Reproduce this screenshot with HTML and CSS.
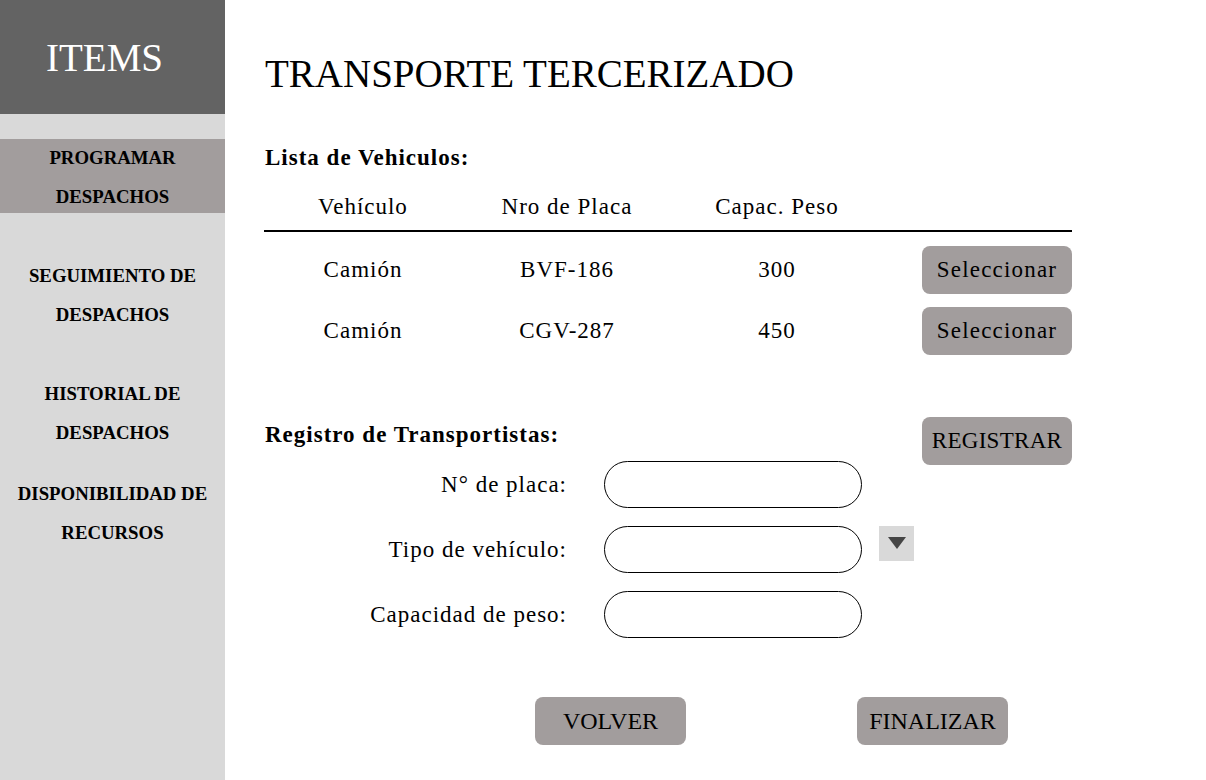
FILE: index.html
```html
<!DOCTYPE html>
<html lang="es">
<head>
<meta charset="utf-8">
<title>Transporte Tercerizado</title>
<link rel="stylesheet" href="styles.css">
</head>
<body>
<div class="app">
  <aside class="sidebar">
    <div class="sidebar-header">ITEMS</div>
    <nav class="nav">
      <a class="nav-item active">PROGRAMAR<br>DESPACHOS</a>
      <a class="nav-item nav-item--2">SEGUIMIENTO DE<br>DESPACHOS</a>
      <a class="nav-item nav-item--3">HISTORIAL DE<br>DESPACHOS</a>
      <a class="nav-item nav-item--4">DISPONIBILIDAD DE<br>RECURSOS</a>
    </nav>
  </aside>
  <main class="main">
    <h1 class="title">TRANSPORTE TERCERIZADO</h1>
    <section class="list">
      <h2 class="section-title">Lista de Vehiculos:</h2>
      <div class="table">
        <div class="row row--head">
          <span class="cell">Vehículo</span>
          <span class="cell">Nro de Placa</span>
          <span class="cell">Capac. Peso</span>
          <span class="cell"></span>
        </div>
        <div class="row row--first">
          <span class="cell">Camión</span>
          <span class="cell">BVF-186</span>
          <span class="cell">300</span>
          <span class="cell cell--action"><button class="btn btn--select">Seleccionar</button></span>
        </div>
        <div class="row">
          <span class="cell">Camión</span>
          <span class="cell">CGV-287</span>
          <span class="cell">450</span>
          <span class="cell cell--action"><button class="btn btn--select">Seleccionar</button></span>
        </div>
      </div>
    </section>
    <section class="register">
      <div class="register-head">
        <h2 class="section-title section-title--register">Registro de Transportistas:</h2>
        <button class="btn btn--register">REGISTRAR</button>
      </div>
      <div class="form">
        <div class="field">
          <label class="field-label">N° de placa:</label>
          <div class="field-input"></div>
        </div>
        <div class="field">
          <label class="field-label">Tipo de vehículo:</label>
          <div class="field-input"></div>
          <div class="dropdown">
            <svg width="20" height="14" viewBox="0 0 20 14"><polygon points="1,1 19,1 10,13" fill="#454545"/></svg>
          </div>
        </div>
        <div class="field">
          <label class="field-label">Capacidad de peso:</label>
          <div class="field-input"></div>
        </div>
      </div>
    </section>
    <div class="actions">
      <button class="btn btn--action">VOLVER</button>
      <button class="btn btn--action">FINALIZAR</button>
    </div>
  </main>
</div>
</body>
</html>
```
FILE: styles.css
```css
* { box-sizing: border-box; }
html, body { margin: 0; padding: 0; background: #ffffff; }
body {
  font-family: "Liberation Serif", "Times New Roman", serif;
  color: #000;
}
.app {
  display: flex;
  width: 1206px;
  height: 780px;
}
.sidebar {
  width: 225px;
  flex: 0 0 225px;
  background: #d9d9d9;
  display: flex;
  flex-direction: column;
}
.sidebar-header {
  height: 114px;
  background: #636363;
  color: #ffffff;
  font-size: 39px;
  display: flex;
  align-items: center;
  justify-content: center;
  padding-right: 16px;
}
.nav {
  display: flex;
  flex-direction: column;
  margin-top: 25px;
}
.nav-item {
  display: flex;
  align-items: center;
  justify-content: center;
  text-align: center;
  font-weight: bold;
  font-size: 18.8px;
  line-height: 39px;
  padding-top: 2px;
}
.nav-item.active {
  background: #a29d9d;
  height: 74px;
  padding-top: 2px;
}
.nav-item--2 { margin-top: 41px; }
.nav-item--3 { margin-top: 38px; }
.nav-item--4 { margin-top: 20px; }

.main {
  flex: 1;
  padding: 52px 0 0 39px;
}
.title {
  margin: 0;
  font-weight: normal;
  font-size: 39px;
  line-height: 43px;
  padding-left: 1px;
}
.list { margin-top: 49px; }
.section-title {
  margin: 0;
  font-size: 23px;
  line-height: 28px;
  font-weight: bold;
  letter-spacing: 1px;
  padding-left: 1px;
}
.table {
  width: 808px;
  margin-top: 21px;
  font-size: 23px;
  letter-spacing: 1px;
}
.row {
  display: grid;
  grid-template-columns: 198px 210px 210px 190px;
  align-items: center;
  height: 48px;
  margin-top: 13px;
}
.row--first { margin-top: 14px; }
.row--head {
  height: auto;
  margin-top: 0;
  line-height: 28px;
  padding-bottom: 9px;
  border-bottom: 2px solid #000;
}
.cell { text-align: center; }
.cell--action { display: flex; justify-content: flex-end; }
.btn {
  font-family: "Liberation Serif", "Times New Roman", serif;
  color: #000;
  background: #a29d9d;
  border: none;
  border-radius: 8px;
  display: flex;
  align-items: center;
  justify-content: center;
  padding: 0;
}
.btn--select {
  width: 150px;
  height: 48px;
  font-size: 23px;
  letter-spacing: 1.2px;
}
.register { margin-top: 62px; width: 808px; }
.register-head {
  display: flex;
  justify-content: space-between;
  align-items: flex-start;
}
.section-title--register { margin-top: 4px; }
.btn--register {
  width: 150px;
  height: 48px;
  font-size: 23px;
  letter-spacing: 0.3px;
}
.form {
  margin-top: -4px;
  display: flex;
  flex-direction: column;
  gap: 18px;
}
.field {
  display: flex;
  align-items: center;
  height: 47px;
  font-size: 23px;
  letter-spacing: 1px;
}
.field-label {
  width: 303px;
  text-align: right;
}
.field-input {
  margin-left: 37px;
  width: 258px;
  height: 47px;
  border: 1px solid #000;
  border-radius: 24px;
  background: #fff;
}
.dropdown {
  margin-left: 17px;
  align-self: flex-start;
  width: 35px;
  height: 35px;
  background: #d9d9d9;
  display: flex;
  align-items: center;
  justify-content: center;
  padding-bottom: 2px;
}
.actions {
  display: flex;
  gap: 171px;
  margin-top: 59px;
  padding-left: 271px;
}
.btn--action {
  width: 151px;
  height: 48px;
  font-size: 24px;
}
```
